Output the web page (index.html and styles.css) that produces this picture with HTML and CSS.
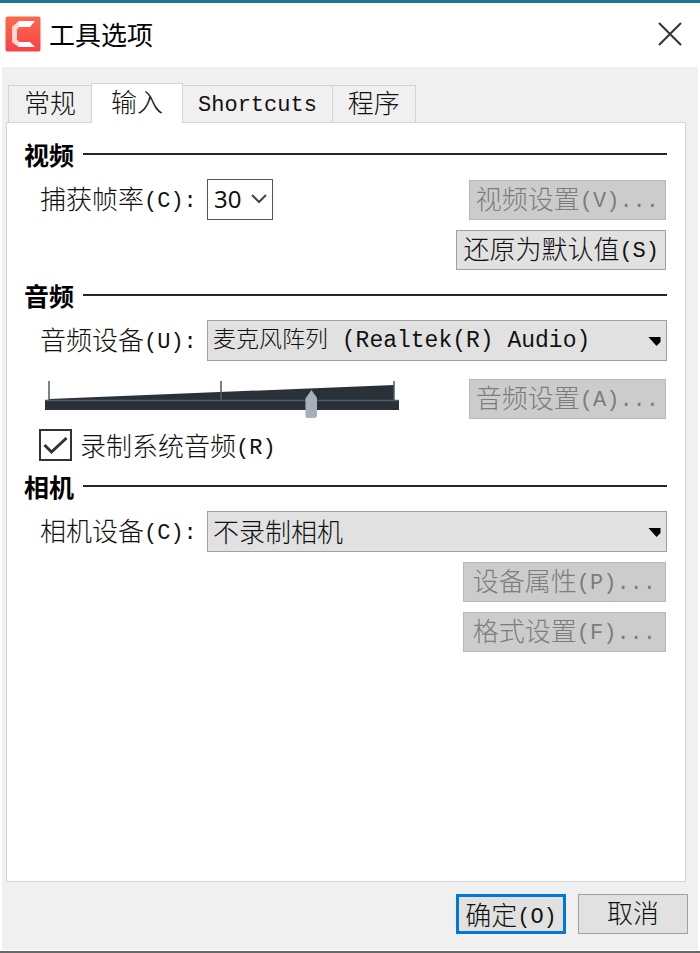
FILE: index.html
```html
<!DOCTYPE html>
<html lang="zh-CN">
<head>
    <meta charset="UTF-8">
    <meta name="viewport" content="width=device-width, initial-scale=1.0">
    <title>工具选项</title>
    <link rel="stylesheet" href="styles.css">
</head>
<body>
    <div class="window">
        <!-- 标题栏 -->
        <header class="title-bar">
            <svg class="logo" viewBox="0 0 36 36" aria-hidden="true">
                <defs>
                    <linearGradient id="logoBg" x1="0" y1="0" x2="0" y2="1">
                        <stop offset="0" stop-color="#fb6a4c"/>
                        <stop offset="1" stop-color="#fb4147"/>
                    </linearGradient>
                </defs>
                <rect x="0.5" y="0.5" width="35" height="35" rx="2" fill="url(#logoBg)"/>
                <path d="M14 5H30L25 11H14L12 13V24L14 26H25L30 31H14L7 26V11Z" fill="#fff"/>
                <path d="M14 5V11L12 13V24L14 26V31L7 26V11Z" fill="#ffd9d2"/>
            </svg>
            <h1>工具选项</h1>
            <button class="close-btn" type="button" aria-label="关闭">
                <svg viewBox="0 0 24 24"><path d="M1 1L23 23M23 1L1 23"/></svg>
            </button>
        </header>

        <main class="dialog">
            <!-- 选项卡 -->
            <div class="tabs" role="tablist">
                <button class="tab" type="button" role="tab">常规</button>
                <button class="tab active" type="button" role="tab" aria-selected="true">输入</button>
                <button class="tab" type="button" role="tab"><span class="en">Shortcuts</span></button>
                <button class="tab" type="button" role="tab">程序</button>
            </div>

            <div class="panel" role="tabpanel">
                <section>
                    <h2>视频</h2>
                    <div class="row">
                        <label class="label" for="fps">捕获帧率<span class="en">(C):</span></label>
                        <div class="select small">
                            <select id="fps"><option>30</option></select>
                            <svg class="chevron" viewBox="0 0 16 10"><path d="M1 1L8 8L15 1"/></svg>
                        </div>
                        <button class="btn end" type="button" disabled>视频设置<span class="en">(V)...</span></button>
                    </div>
                    <div class="row">
                        <button class="btn end" type="button">还原为默认值<span class="en">(S)</span></button>
                    </div>
                </section>

                <section>
                    <h2>音频</h2>
                    <div class="row">
                        <label class="label" for="mic">音频设备<span class="en">(U):</span></label>
                        <div class="select">
                            <select id="mic" class="mixed"><option>麦克风阵列 (Realtek(R) Audio)</option></select>
                            <svg class="arrow" viewBox="0 0 12 10"><path d="M0 0H12V5L8 9Z"/></svg>
                        </div>
                    </div>
                    <div class="row volume-row">
                        <div class="volume">
                            <svg viewBox="0 0 356 38" preserveAspectRatio="none" aria-hidden="true">
                                <path d="M5 19L350 5V20H5Z" fill="#293038"/>
                                <rect x="1" y="20" width="354" height="10" fill="#293038"/>
                                <path d="M1 20.500H355M5 1V20M177 1V20M350 1V20" stroke="#4b5d64" stroke-width="1.500" fill="none"/>
                            </svg>
                            <input type="range" min="0" max="100" value="76" aria-label="音量">
                        </div>
                        <button class="btn end" type="button" disabled>音频设置<span class="en">(A)...</span></button>
                    </div>
                    <label class="check">
                        <span class="box">
                            <input type="checkbox" checked>
                            <svg viewBox="0 0 32 32"><path d="M5 16L12 23L27 9"/></svg>
                        </span>
                        <span>录制系统音频<span class="en">(R)</span></span>
                    </label>
                </section>

                <section>
                    <h2>相机</h2>
                    <div class="row">
                        <label class="label" for="camera">相机设备<span class="en">(C):</span></label>
                        <div class="select">
                            <select id="camera"><option>不录制相机</option></select>
                            <svg class="arrow" viewBox="0 0 12 10"><path d="M0 0H12V5L8 9Z"/></svg>
                        </div>
                    </div>
                    <div class="row">
                        <button class="btn wide end" type="button" disabled>设备属性<span class="en">(P)...</span></button>
                    </div>
                    <div class="row">
                        <button class="btn wide end" type="button" disabled>格式设置<span class="en">(F)...</span></button>
                    </div>
                </section>
            </div>

            <!-- 底部按钮 -->
            <footer class="actions">
                <button class="btn primary" type="button">确定<span class="en">(O)</span></button>
                <button class="btn" type="button">取消</button>
            </footer>
        </main>
    </div>
</body>
</html>
```
FILE: styles.css
```css
* {
    margin: 0;
    padding: 0;
    box-sizing: border-box;
}

body, button, select {
    font-family: "Noto Sans CJK SC", sans-serif;
    font-size: 26px;
    font-weight: 300;
    color: #111;
}

.window {
    min-height: 100vh;
    display: flex;
    flex-direction: column;
    background: #fff;
    border-top: 3px solid #22748c;
    border-bottom: 2px solid #66686a;
}

/* 半角字符 */
.en {
    font-family: "Liberation Mono", monospace;
    font-size: 22px;
    line-height: 1;
    vertical-align: 2px;
}

/* 标题栏 */
.title-bar {
    display: flex;
    align-items: center;
    height: 64px;
    padding: 0 18px 2px 5px;
}

.logo {
    width: 36px;
    height: 36px;
    margin-right: 8px;
}

.title-bar h1 {
    font-size: 26px;
    font-weight: 400;
    line-height: 36px;
    color: #000;
}

.close-btn {
    display: flex;
    margin-left: auto;
    background: none;
    border: none;
}

.close-btn svg {
    width: 24px;
    height: 24px;
    fill: none;
    stroke: #333;
    stroke-width: 2;
}

.dialog {
    flex: 1;
    display: flex;
    flex-direction: column;
    margin: 0 2px 1px;
    padding: 16px 12px 16px 4px;
    background: #f0f0f0;
}

/* 选项卡 */
.tabs {
    display: flex;
    align-items: flex-end;
    padding-left: 2px;
}

.tab {
    height: 37px;
    padding: 0 15px 4px;
    line-height: 30px;
    white-space: nowrap;
    background: #f0f0f0;
    border: 1px solid #d5d5d5;
    border-bottom: none;
    margin-right: -1px;
}

.tab.active {
    height: 40px;
    padding: 0 19px 6px;
    margin-bottom: -1px;
    background: #fff;
    position: relative;
    z-index: 1;
}

.panel {
    flex: 1;
    padding: 16px 18px 16px 17px;
    background: #fff;
    border: 1px solid #d5d5d5;
}

section {
    display: flex;
    flex-direction: column;
    gap: 10px;
    margin-bottom: 10px;
}

h2 {
    display: flex;
    align-items: center;
    gap: 9px;
    font-size: 25px;
    font-weight: 700;
    line-height: 30px;
    color: #000;
}

h2::after {
    content: "";
    flex: 1;
    height: 2px;
    background: #262626;
}

.row {
    display: flex;
    align-items: center;
    min-height: 40px;
    padding-left: 16px;
}

.label {
    width: 167px;
    line-height: 36px;
    padding-bottom: 3px;
    white-space: nowrap;
}

.select {
    flex: 1;
    position: relative;
}

.select select {
    display: block;
    width: 100%;
    height: 41px;
    padding: 0 24px 4px 5px;
    appearance: none;
    background: #e1e1e1;
    border: 1px solid #a0a0a0;
    border-radius: 0;
}

/* 中英文混排 */
.select .mixed {
    padding-bottom: 0;
    font-family: "Liberation Mono", "Noto Sans CJK SC", monospace;
    font-size: 23px;
}

.select.small {
    flex: none;
    width: 66px;
}

.select.small select {
    padding-left: 6px;
    padding-bottom: 2px;
    font-family: "Noto Sans", sans-serif;
    font-size: 24px;
    font-weight: 400;
    background: #fff;
    border-color: #555;
}

.select svg {
    position: absolute;
    pointer-events: none;
}

.arrow {
    right: 6px;
    top: 17px;
    width: 13px;
    height: 10px;
}

.chevron {
    right: 6px;
    top: 15px;
    width: 16px;
    height: 10px;
    fill: none;
    stroke: #444;
    stroke-width: 2;
}

.btn {
    height: 40px;
    min-width: 110px;
    padding: 0 6px 4px;
    line-height: 34px;
    white-space: nowrap;
    background: #e1e1e1;
    border: 1px solid #a0a0a0;
}

.btn:disabled {
    color: #7c7c7c;
    background: #ccc;
    border-color: #b8b8b8;
}

.btn.end {
    margin-left: auto;
    margin-right: 1px;
}

.btn.wide {
    padding: 0 9px 4px;
}

.btn.primary {
    border: 3px solid #0078d7;
}

/* 音量滑块 */
.volume-row {
    margin-top: 8px;
}

.volume {
    position: relative;
    width: 356px;
    height: 38px;
    margin-left: 4px;
}

.volume svg {
    display: block;
    width: 100%;
    height: 100%;
}

.volume input {
    position: absolute;
    left: 0;
    bottom: 0;
    width: 100%;
    height: 28px;
    appearance: none;
    background: none;
}

.volume input::-webkit-slider-thumb {
    appearance: none;
    width: 12px;
    height: 28px;
    background: #a5b0b8;
    border-radius: 0 0 3px 3px;
    clip-path: polygon(50% 0, 100% 30%, 100% 100%, 0 100%, 0 30%);
}

.check {
    display: flex;
    align-items: center;
    gap: 8px;
    height: 32px;
    margin-left: 15px;
    line-height: 32px;
}

.box {
    position: relative;
    width: 33px;
    height: 32px;
}

.box input {
    display: block;
    width: 100%;
    height: 100%;
    appearance: none;
    background: #fff;
    border: 2px solid #333;
}

.box svg {
    position: absolute;
    inset: 0;
    width: 100%;
    height: 100%;
    fill: none;
    stroke: #333;
    stroke-width: 3;
    visibility: hidden;
    pointer-events: none;
}

.box input:checked + svg {
    visibility: visible;
}

.actions {
    display: flex;
    justify-content: flex-end;
    gap: 12px;
    margin-top: 12px;
    margin-right: -2px;
}
```
